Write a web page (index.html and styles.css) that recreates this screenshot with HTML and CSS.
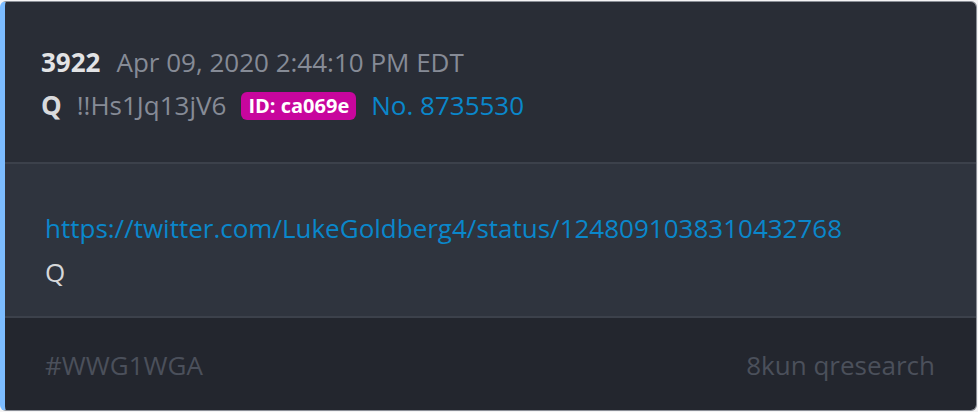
FILE: index.html
```html
<!DOCTYPE html>
<html>
<head>
    <title>Q Drop 3922</title>
    <link rel="stylesheet" href="styles.css">
</head>
<body>
    <div class="post">
        <div class="post-header">
            <div class="post-line">
                <span class="drop-num">3922</span>
                <span class="drop-date">Apr 09, 2020 2:44:10 PM EDT</span>
            </div>
            <div class="post-line">
                <span class="author">Q</span>
                <span class="trip">!!Hs1Jq13jV6</span>
                <span class="user-id">ID: ca069e</span>
                <a class="post-no" href="#">No. 8735530</a>
            </div>
        </div>
        <div class="post-body">
            <a class="post-link" href="#">https://twitter.com/LukeGoldberg4/status/1248091038310432768</a>
            <div class="post-text">Q</div>
        </div>
        <div class="post-footer">
            <span>#WWG1WGA</span>
            <span>8kun qresearch</span>
        </div>
    </div>
</body>
</html>
```

FILE: styles.css
```css
body {
    margin: 0;
    background-color: #f4f4f5;
    font-family: "Open Sans", sans-serif;
    font-size: 26px;
}

.post {
    margin: 1px 1px 0 0;
    border: 1px solid #8b8f97;
    border-left: 5px solid #7cbcff;
    border-radius: 6px;
    overflow: hidden;
}

.post-header {
    background-color: #292d36;
    padding: 39px 36px 35px;
    border-bottom: 2px solid #3c414b;
}

.post-line {
    display: flex;
    align-items: center;
    line-height: 43px;
}

.drop-num {
    font-weight: bold;
    color: #e2e3e5;
    margin-right: 16px;
}

.drop-date {
    color: #868b96;
}

.author {
    font-weight: bold;
    color: #d9dadc;
    margin-right: 15px;
}

.trip {
    color: #868b96;
    margin-right: 15px;
}

.user-id {
    background-color: #c8069d;
    color: #fff;
    font-weight: bold;
    font-size: 20px;
    line-height: 28px;
    padding: 0 7px;
    border-radius: 6px;
    margin-right: 15px;
}

.post-no,
.post-link {
    color: #0a87cb;
    text-decoration: none;
}

.post-body {
    background-color: #2f343e;
    padding: 42px 40px 22px;
    border-bottom: 2px solid #3c414b;
    line-height: 44px;
}

.post-link {
    display: block;
}

.post-text {
    color: #d6d7d9;
}

.post-footer {
    background-color: #23262e;
    padding: 25px 41px 23px 40px;
    line-height: 44px;
    color: #4b505b;
    display: flex;
    justify-content: space-between;
}
```
